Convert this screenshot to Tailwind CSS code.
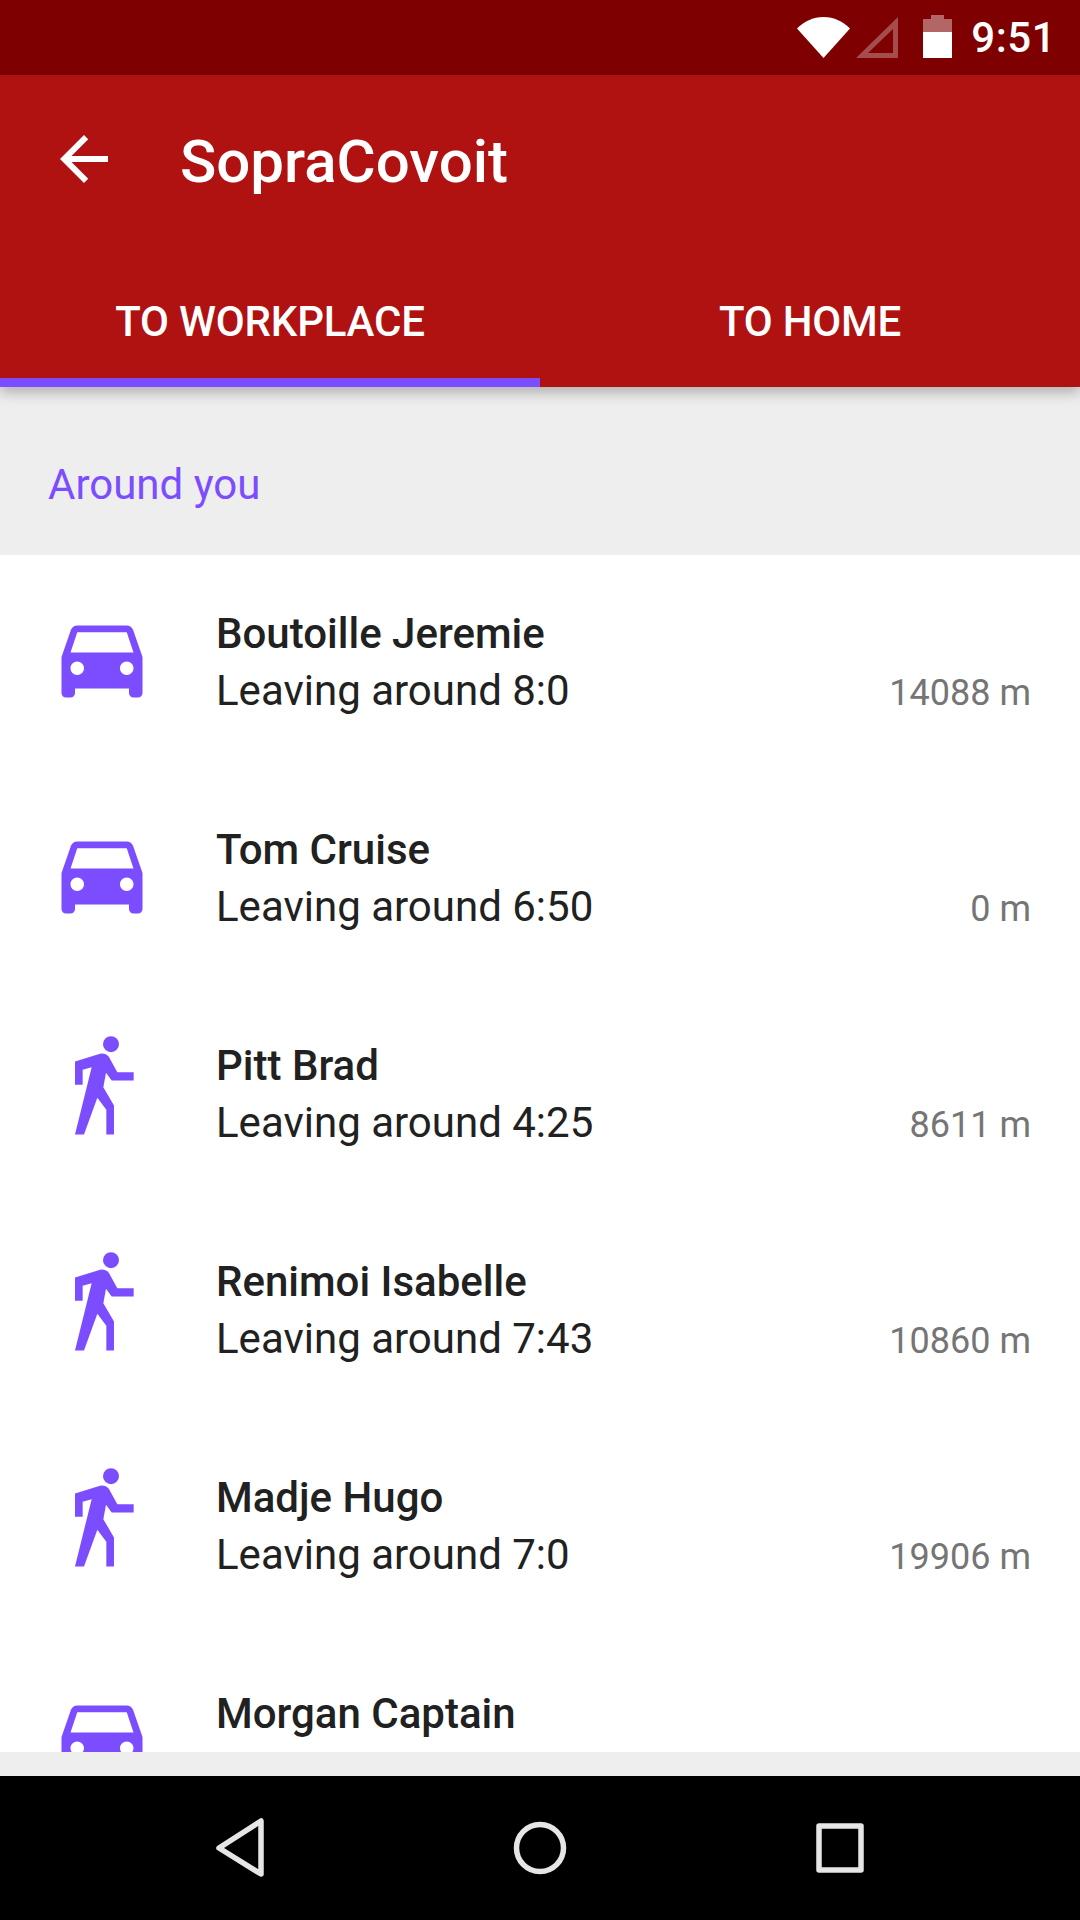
<!DOCTYPE html>
<html>
<head>
<meta charset="utf-8">
<script src="https://cdn.jsdelivr.net/npm/@tailwindcss/browser@4"></script>
</head>
<body class="m-0">
<div class="w-[1080px] h-[1920px] flex flex-col overflow-hidden bg-[#eeeeee] font-['Roboto',sans-serif]">
  <div class="h-[75px] shrink-0 bg-[#7f0000] flex items-center justify-end relative">
    <svg class="absolute left-[797px] top-[17px]" width="53" height="41" viewBox="0 0 53 41"><path d="M0 11.5C7 4.5 16 0 26.500 0S46 4.500 53 11.500L26.500 41z" fill="#fff"/></svg>
    <svg class="absolute left-[856px] top-[17px]" width="42" height="41" viewBox="0 0 42 41"><path d="M42 0V41H0zM37 12L12 36H37z" fill="#fff" fill-opacity=".3" fill-rule="evenodd"/></svg>
    <svg class="absolute left-[923px] top-[15px]" width="29" height="43" viewBox="0 0 29 43"><path d="M8 0H21V4H29V17H0V4H8z" fill="#fff" fill-opacity=".4"/><path d="M0 17H29V43H0z" fill="#fff"/></svg>
    <span class="text-[42px] leading-none font-medium text-white pr-[24px] tracking-[0.5px]">9:51</span>
  </div>
  <div class="shrink-0 relative z-10 bg-[#b01111] shadow-[0_6px_12px_rgba(0,0,0,0.25)]">
    <div class="h-[168px] flex items-center pl-[48px]">
      <svg width="72" height="72" viewBox="0 0 24 24" fill="#fff"><path d="M20 11H7.830l5.590-5.590L12 4l-8 8 8 8 1.410-1.410L7.830 13H20v-2z"/></svg>
      <span class="ml-[60px] mt-[5px] text-[60px] leading-none font-medium text-white">SopraCovoit</span>
    </div>
    <div class="h-[144px] flex">
      <div class="w-[540px] flex items-center justify-center border-b-[9px] border-[#7c4dff] pt-[22px]"><span class="text-[42px] leading-none font-medium text-white tracking-[-0.2px]">TO WORKPLACE</span></div>
      <div class="w-[540px] flex items-center justify-center pt-[13px]"><span class="text-[42px] leading-none font-medium text-white tracking-[-0.2px]">TO HOME</span></div>
    </div>
  </div>
  <div class="h-[168px] shrink-0 flex items-center pl-[48px] pt-[28px]"><span class="text-[42px] leading-none text-[#7c4dff]">Around you</span></div>
  <div class="h-[1197px] shrink-0 bg-white overflow-hidden flex flex-col">

    <div class="h-[216px] shrink-0 flex items-center pl-[48px] pr-[49px]">
      <svg class="mb-[13px]" width="108" height="108" viewBox="0 0 24 24" fill="#7c4dff"><path d="M18.920 6.010C18.720 5.420 18.160 5 17.500 5h-11c-.66 0-1.210.42-1.420 1.010L3 12v8c0 .55.45 1 1 1h1c.55 0 1-.45 1-1v-1h12v1c0 .55.45 1 1 1h1c.55 0 1-.45 1-1v-8l-2.080-5.990zM6.500 16c-.83 0-1.500-.67-1.500-1.500S5.670 13 6.500 13s1.500.67 1.500 1.500S7.330 16 6.500 16zm11 0c-.83 0-1.500-.67-1.500-1.500s.67-1.500 1.500-1.500 1.500.67 1.500 1.500-.67 1.500-1.500 1.500zM5 11l1.500-4.500h11L19 11H5z"/></svg>
      <div class="ml-[60px] flex-1 flex flex-col">
        <div class="text-[42px] leading-[56px] font-medium text-[#212121]">Boutoille Jeremie</div>
        <div class="text-[42px] leading-[58px] text-[#212121]">Leaving around 8:0</div>
      </div>
      <div class="self-end mb-[49px] text-[36px] leading-[58px] text-[#757575]">14088 m</div>
    </div>

    <div class="h-[216px] shrink-0 flex items-center pl-[48px] pr-[49px]">
      <svg class="mb-[13px]" width="108" height="108" viewBox="0 0 24 24" fill="#7c4dff"><path d="M18.920 6.010C18.720 5.420 18.160 5 17.500 5h-11c-.66 0-1.210.42-1.420 1.010L3 12v8c0 .55.45 1 1 1h1c.55 0 1-.45 1-1v-1h12v1c0 .55.45 1 1 1h1c.55 0 1-.45 1-1v-8l-2.080-5.990zM6.500 16c-.83 0-1.500-.67-1.500-1.500S5.670 13 6.500 13s1.500.67 1.500 1.500S7.330 16 6.500 16zm11 0c-.83 0-1.500-.67-1.500-1.500s.67-1.500 1.500-1.500 1.500.67 1.500 1.500-.67 1.500-1.500 1.500zM5 11l1.500-4.500h11L19 11H5z"/></svg>
      <div class="ml-[60px] flex-1 flex flex-col">
        <div class="text-[42px] leading-[56px] font-medium text-[#212121]">Tom Cruise</div>
        <div class="text-[42px] leading-[58px] text-[#212121]">Leaving around 6:50</div>
      </div>
      <div class="self-end mb-[49px] text-[36px] leading-[58px] text-[#757575]">0 m</div>
    </div>

    <div class="h-[216px] shrink-0 flex items-center pl-[48px] pr-[49px]">
      <svg class="mb-[13px]" width="108" height="108" viewBox="24 43.500 324 324" fill="#7c4dff"><circle cx="213" cy="71" r="24"/><path d="M105 123L180 100Q196 96 206 108L232 155H281V180H215L198 157L190 200L222 255V342H199V268L172 232L132 342H105L155 140L128 148V193H105z"/></svg>
      <div class="ml-[60px] flex-1 flex flex-col">
        <div class="text-[42px] leading-[56px] font-medium text-[#212121]">Pitt Brad</div>
        <div class="text-[42px] leading-[58px] text-[#212121]">Leaving around 4:25</div>
      </div>
      <div class="self-end mb-[49px] text-[36px] leading-[58px] text-[#757575]">8611 m</div>
    </div>

    <div class="h-[216px] shrink-0 flex items-center pl-[48px] pr-[49px]">
      <svg class="mb-[13px]" width="108" height="108" viewBox="24 43.500 324 324" fill="#7c4dff"><circle cx="213" cy="71" r="24"/><path d="M105 123L180 100Q196 96 206 108L232 155H281V180H215L198 157L190 200L222 255V342H199V268L172 232L132 342H105L155 140L128 148V193H105z"/></svg>
      <div class="ml-[60px] flex-1 flex flex-col">
        <div class="text-[42px] leading-[56px] font-medium text-[#212121]">Renimoi Isabelle</div>
        <div class="text-[42px] leading-[58px] text-[#212121]">Leaving around 7:43</div>
      </div>
      <div class="self-end mb-[49px] text-[36px] leading-[58px] text-[#757575]">10860 m</div>
    </div>

    <div class="h-[216px] shrink-0 flex items-center pl-[48px] pr-[49px]">
      <svg class="mb-[13px]" width="108" height="108" viewBox="24 43.500 324 324" fill="#7c4dff"><circle cx="213" cy="71" r="24"/><path d="M105 123L180 100Q196 96 206 108L232 155H281V180H215L198 157L190 200L222 255V342H199V268L172 232L132 342H105L155 140L128 148V193H105z"/></svg>
      <div class="ml-[60px] flex-1 flex flex-col">
        <div class="text-[42px] leading-[56px] font-medium text-[#212121]">Madje Hugo</div>
        <div class="text-[42px] leading-[58px] text-[#212121]">Leaving around 7:0</div>
      </div>
      <div class="self-end mb-[49px] text-[36px] leading-[58px] text-[#757575]">19906 m</div>
    </div>

    <div class="h-[216px] shrink-0 flex items-center pl-[48px] pr-[49px]">
      <svg class="mb-[13px]" width="108" height="108" viewBox="0 0 24 24" fill="#7c4dff"><path d="M18.920 6.010C18.720 5.420 18.160 5 17.500 5h-11c-.66 0-1.210.42-1.420 1.010L3 12v8c0 .55.45 1 1 1h1c.55 0 1-.45 1-1v-1h12v1c0 .55.45 1 1 1h1c.55 0 1-.45 1-1v-8l-2.080-5.990zM6.500 16c-.83 0-1.500-.67-1.500-1.500S5.670 13 6.500 13s1.500.67 1.500 1.500S7.330 16 6.500 16zm11 0c-.83 0-1.500-.67-1.500-1.500s.67-1.500 1.500-1.500 1.500.67 1.500 1.500-.67 1.500-1.500 1.500zM5 11l1.500-4.500h11L19 11H5z"/></svg>
      <div class="ml-[60px] flex-1 flex flex-col">
        <div class="text-[42px] leading-[56px] font-medium text-[#212121]">Morgan Captain</div>
        <div class="h-[58px]"></div>
      </div>
    </div>
  </div>
  <div class="h-[24px] shrink-0 bg-[#eeeeee]"></div>
  <div class="h-[144px] shrink-0 bg-black relative">
    <svg class="absolute left-[210px] top-[40px]" width="60" height="64" viewBox="0 0 60 64" fill="none" stroke="#e6e6e6" stroke-width="5.500" stroke-linejoin="round"><path d="M51 5V58L9 32z"/></svg>
    <svg class="absolute left-[510px] top-[42px]" width="60" height="60" viewBox="0 0 60 60" fill="none" stroke="#e6e6e6" stroke-width="5.500"><circle cx="30" cy="30" r="23.500"/></svg>
    <svg class="absolute left-[810px] top-[41px]" width="60" height="60" viewBox="0 0 60 60" fill="none" stroke="#e6e6e6" stroke-width="5.500" stroke-linejoin="round"><path d="M9 9H51V53H9z"/></svg>
  </div>
</div>
</body>
</html>
